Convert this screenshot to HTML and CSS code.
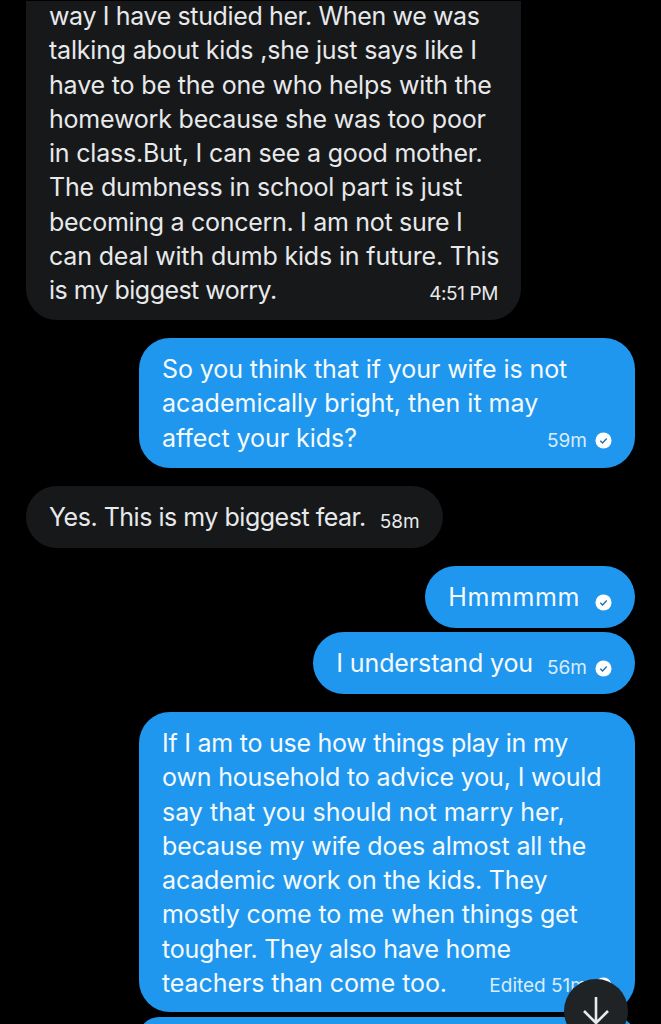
FILE: index.html
```html
<!DOCTYPE html>
<html lang="en">
<head>
<meta charset="utf-8">
<title>Messages</title>
<link rel="stylesheet" href="styles.css">
</head>
<body>
<main class="chat">
  <div class="row in">
    <div class="bubble gray first-bubble">
      <p class="text lift">
        <span class="line t37">way I have studied her. When we was</span>
        <span class="line t20">talking about kids ,she just says like I</span>
        <span class="line t16">have to be the one who helps with the</span>
        <span class="line t20">homework because she was too poor</span>
        <span class="line t20">in class.But, I can see a good mother.</span>
        <span class="line t16">The dumbness in school part is just</span>
        <span class="line t30">becoming a concern. I am not sure I</span>
        <span class="line t16">can deal with dumb kids in future. This</span>
        <span class="line last"><span class="t55">is my biggest worry.</span><span class="meta pm">4:51 PM</span></span>
      </p>
    </div>
  </div>
  <div class="row out gap-18">
    <div class="bubble blue wide">
      <p class="text">
        <span class="line t08">So you think that if your wife is not</span>
        <span class="line">academically bright, then it may</span>
        <span class="line last"><span class="t05">affect your kids?</span><span class="meta">59m<svg class="check" viewBox="0 0 18 18"><circle cx="9" cy="9" r="8.5" fill="#fff"/><path d="M5.6 9.3l2.4 2.4 4.4-4.8" fill="none" stroke="#1c6fae" stroke-width="1.4"/></svg></span></span>
      </p>
    </div>
  </div>
  <div class="row in gap-18">
    <div class="bubble gray pill">
      <p class="text"><span class="t48">Yes. This is my biggest fear.</span><span class="meta inline">58m</span></p>
    </div>
  </div>
  <div class="row out gap-18">
    <div class="bubble blue pill">
      <p class="text"><span class="wide-m">Hmmmmm</span><span class="meta inline hm"><svg class="check low" viewBox="0 0 18 18"><circle cx="9" cy="9" r="8.5" fill="#fff"/><path d="M5.6 9.3l2.4 2.4 4.4-4.8" fill="none" stroke="#1c6fae" stroke-width="1.4"/></svg></span></p>
    </div>
  </div>
  <div class="row out gap-4">
    <div class="bubble blue pill">
      <p class="text"><span class="t12">I understand you</span><span class="meta inline">56m<svg class="check" viewBox="0 0 18 18"><circle cx="9" cy="9" r="8.5" fill="#fff"/><path d="M5.6 9.3l2.4 2.4 4.4-4.8" fill="none" stroke="#1c6fae" stroke-width="1.4"/></svg></span></p>
    </div>
  </div>
  <div class="row out gap-18">
    <div class="bubble blue wide tall">
      <p class="text">
        <span class="line t25">If I am to use how things play in my</span>
        <span class="line t16">own household to advice you, I would</span>
        <span class="line">say that you should not marry her,</span>
        <span class="line t12">because my wife does almost all the</span>
        <span class="line t16">academic work on the kids. They</span>
        <span class="line t16">mostly come to me when things get</span>
        <span class="line t25">tougher. They also have home</span>
        <span class="line last"><span class="t08">teachers than come too.</span><span class="meta">Edited 51m<svg class="check" viewBox="0 0 18 18"><circle cx="9" cy="9" r="8.5" fill="#fff"/></svg></span></span>
      </p>
    </div>
  </div>
  <div class="row out gap-5">
    <div class="bubble blue wide next"></div>
  </div>
  <button class="scroll" aria-label="Scroll to bottom">
    <svg viewBox="0 0 26 30" width="26" height="30"><path d="M13 1V27M1 15L13 27L25 15" fill="none" stroke="#e7e9ea" stroke-width="2.6"/></svg>
  </button>
</main>
</body>
</html>
```
FILE: styles.css
```css
* { box-sizing: border-box; }
html, body { margin: 0; padding: 0; background: #000; }
body { width: 661px; height: 1024px; overflow: hidden; }
.chat {
  position: relative;
  width: 661px;
  height: 1024px;
  overflow: hidden;
  padding: 0 26px;
  font-family: Inter, "Liberation Sans", sans-serif;
  color: #e7e9ea;
}
.row { display: flex; }
.row.in { justify-content: flex-start; }
.row.out { justify-content: flex-end; }
.gap-18 { margin-top: 18px; }
.gap-4 { margin-top: 4px; }
.gap-5 { margin-top: 5px; }
.bubble { border-radius: 31px; padding: 14px 23px 13.25px; flex: none; }
.gray { background: #17181a; }
.blue { background: #2097ee; color: #f5fafe; }
.first-bubble {
  width: 495px;
  margin-top: 1px;
  height: 319px;
  border-radius: 0 0 31px 31px;
  padding-top: 0;
}
.wide { width: 496px; }
.tall { padding-bottom: 12px; }
.pill { height: 62px; padding-top: 14px; padding-bottom: 0; }
.text {
  margin: 0;
  font-size: 25px;
  line-height: 34.25px;
  white-space: nowrap;
}
.lift { margin-top: -2px; }
.line { display: block; }
.last { display: flex; justify-content: space-between; align-items: center; }
.t05 { letter-spacing: -0.05px; }
.t08 { letter-spacing: -0.08px; }
.t12 { letter-spacing: -0.12px; }
.t16 { letter-spacing: -0.16px; }
.t20 { letter-spacing: -0.2px; }
.t25 { letter-spacing: -0.25px; }
.t30 { letter-spacing: -0.3px; }
.t37 { letter-spacing: -0.37px; }
.t48 { letter-spacing: -0.48px; }
.t55 { letter-spacing: -0.55px; }
.wide-m { letter-spacing: 0.6px; }
.meta {
  display: inline-flex;
  align-items: center;
  gap: 8px;
  font-size: 19px;
  line-height: 24px;
  color: #d9ecfb;
  position: relative;
  top: 3px;
}
.gray .meta { color: #e7e9ea; }
.pm { letter-spacing: -0.4px; top: 4px; }
.inline { margin-left: 14px; top: 2px; }
.hm { margin-left: 15px; }
.check { width: 17px; height: 17px; flex: none; }
.low { position: relative; top: 3px; }
.next { height: 40px; }
.scroll {
  position: absolute;
  left: 564px;
  top: 979px;
  width: 64px;
  height: 64px;
  border: 0;
  border-radius: 50%;
  background: #1f2326;
  display: flex;
  justify-content: center;
  padding: 17px 0 0;
}
```
